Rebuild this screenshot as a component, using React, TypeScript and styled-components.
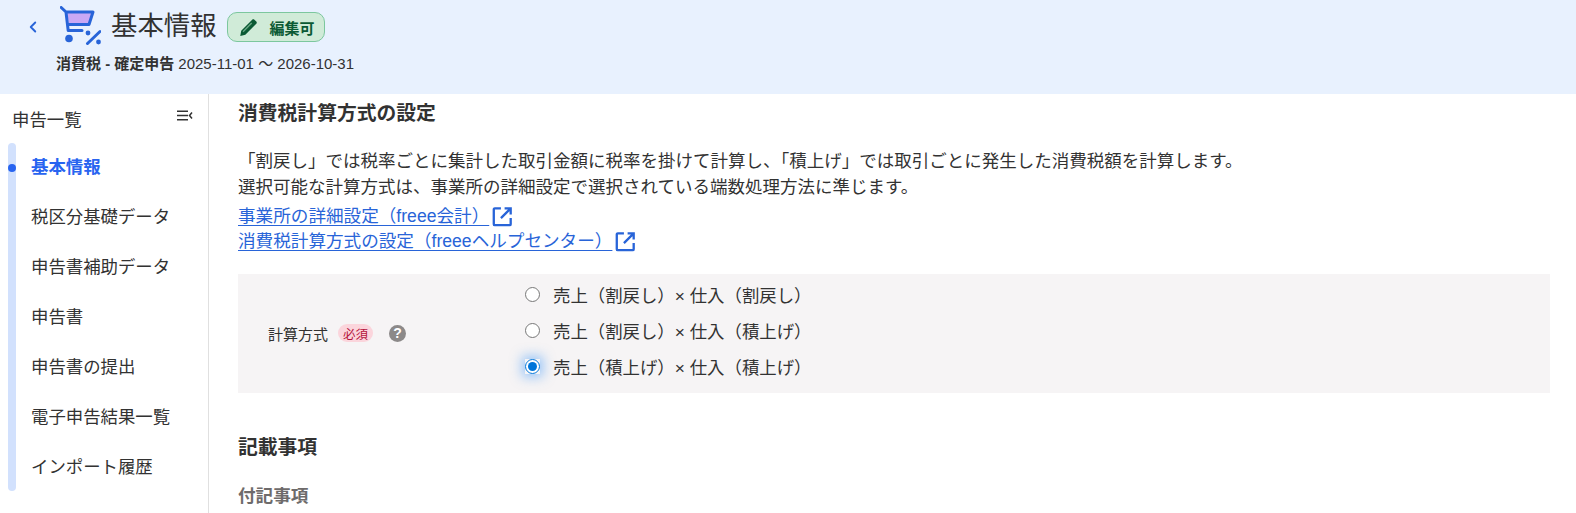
import React from 'react';
import styled, { createGlobalStyle } from 'styled-components';
import { ChevronLeft } from 'lucide-react';

const GlobalStyle = createGlobalStyle`
    html, body {
        margin: 0;
        height: 513px;
        overflow: hidden;
        background: #fff;
        color: #323232;
        font-family: "Liberation Sans", "Noto Sans CJK JP", sans-serif;
    }
`;

const Page = styled.div`
    width: 1576px;
    height: 513px;
    display: flex;
    flex-direction: column;
    overflow: hidden;
`;

const Header = styled.header`
    height: 94px;
    flex: none;
    box-sizing: border-box;
    padding: 5px 0 0 24px;
    background: #e8f1fe;
`;

const TitleRow = styled.div`
    display: flex;
    align-items: center;
    height: 42px;
`;

const BackButton = styled.span`
    display: flex;
    width: 18px;
    color: #2864d8;
    margin-right: 18px;
    margin-top: 1px;
`;

const Title = styled.h1`
    margin: 0 0 0 10px;
    font-size: 26.4px;
    line-height: 42px;
    font-weight: 400;
    color: #323232;
`;

const EditBadge = styled.span`
    display: flex;
    align-items: center;
    box-sizing: border-box;
    width: 98px;
    height: 30px;
    margin: 2px 0 0 10px;
    padding-left: 11px;
    gap: 12px;
    border: 1px solid #7cc79e;
    border-radius: 10px;
    background: #d0ebd8;
    color: #0b5a34;
    font-size: 15px;
    font-weight: 700;
`;

const SubTitle = styled.div`
    display: flex;
    gap: 4px;
    margin: 6px 0 0 32px;
    font-size: 15px;
    line-height: 22px;
    color: #323232;
    strong {
        font-weight: 700;
    }
`;

const Body = styled.div`
    flex: 1;
    display: flex;
    min-height: 0;
`;

const Sidebar = styled.aside`
    width: 209px;
    flex: none;
    box-sizing: border-box;
    border-right: 1px solid #e0e0e0;
`;

const SideHead = styled.div`
    display: flex;
    align-items: center;
    justify-content: space-between;
    height: 49px;
    padding: 0 15px 0 12px;
    font-size: 17.4px;
    color: #323232;
    svg {
        margin-bottom: 6px;
    }
`;

const NavList = styled.ul`
    position: relative;
    list-style: none;
    margin: 0 0 0 8px;
    padding: 0;
    width: 190px;
    &::before {
        content: '';
        position: absolute;
        left: 0;
        top: 0;
        width: 8px;
        height: 348px;
        border-radius: 4px;
        background: #d2e1fd;
    }
`;

const NavItem = styled.li<{ $active?: boolean }>`
    position: relative;
    height: 50px;
    padding-left: 23px;
    line-height: 50px;
    font-size: 17.4px;
    font-weight: ${p => (p.$active ? 700 : 400)};
    color: ${p => (p.$active ? '#2864f0' : '#323232')};
    &:first-child {
        height: 49px;
        line-height: 49px;
    }
    ${p =>
        p.$active &&
        `&::before {
            content: '';
            position: absolute;
            left: 0;
            top: 21px;
            width: 8px;
            height: 8px;
            border-radius: 50%;
            background: #2864f0;
        }`}
`;

const Main = styled.main`
    flex: 1;
    padding: 6px 26px 0 29px;
    min-width: 0;
`;

const SectionTitle = styled.h2<{ $spaced?: boolean }>`
    margin: ${p => (p.$spaced ? '41px 0 0' : '0')};
    font-size: 19.8px;
    line-height: 26px;
    font-weight: 700;
    color: #323232;
`;

const Description = styled.p`
    margin: 22px 0 3px;
    font-size: 17.5px;
    line-height: 26.4px;
    color: #323232;
`;

const LinkRow = styled.div`
    height: 25px;
    display: flex;
    align-items: center;
    gap: 3px;
    font-size: 17.6px;
    line-height: 25px;
`;

const ExternalLink = styled.a`
    color: #2864d8;
    text-decoration: underline;
    text-underline-offset: 3px;
`;

const FormPanel = styled.div`
    display: flex;
    height: 119px;
    margin-top: 20px;
    background: #f6f4f5;
`;

const FieldLabel = styled.div`
    display: flex;
    align-items: center;
    width: 287px;
    flex: none;
    box-sizing: border-box;
    padding-left: 30px;
    font-size: 15px;
    color: #323232;
`;

const RequiredTag = styled.span`
    display: inline-flex;
    align-items: center;
    justify-content: center;
    width: 35px;
    height: 18px;
    margin-left: 10px;
    border-radius: 9px;
    background: #fbd5dc;
    color: #b5133c;
    font-size: 12.500px;
`;

const HelpMark = styled.span`
    display: inline-flex;
    align-items: center;
    justify-content: center;
    width: 17px;
    height: 17px;
    margin-left: 16px;
    border-radius: 50%;
    background: #8c8989;
    color: #fff;
    font-size: 14px;
    font-weight: 700;
`;

const RadioGroup = styled.div`
    display: flex;
    flex-direction: column;
    padding-top: 3px;
`;

const RadioRow = styled.label`
    display: flex;
    align-items: center;
    height: 36px;
    font-size: 17.4px;
    color: #323232;
`;

const RadioInput = styled.input<{ $focused?: boolean }>`
    width: 15px;
    height: 15px;
    margin: 0 13px 0 0;
    accent-color: #0075d9;
    ${p => p.$focused && 'box-shadow: 0 0 12px 3px rgba(60, 150, 250, 0.5); border-radius: 50%;'}
`;

const NoteTitle = styled.h3`
    margin: 23px 0 0;
    font-size: 17.6px;
    line-height: 26px;
    font-weight: 700;
    color: #6e6b6b;
`;

const CartIcon = () => (
    <svg width="41" height="40" viewBox="0 0 41 40" fill="none">
        <path d="M7 6h26l-4 12H9z" fill="#c9a8f5" />
        <path
            d="M1.200 1.500L6 6l2.200 18.500H22M6 6h27l-4 12.500H9"
            stroke="#2864d8"
            strokeWidth="3"
            strokeLinecap="round"
            strokeLinejoin="round"
        />
        <circle cx="9" cy="32.500" r="3.800" fill="#2864d8" />
        <path d="M27.500 37.500L40 25.500" stroke="#2864d8" strokeWidth="3" strokeLinecap="round" />
        <circle cx="28" cy="27" r="2.400" fill="#2864d8" />
        <circle cx="38.500" cy="36" r="2.400" fill="#2864d8" />
    </svg>
);

const PencilIcon = () => (
    <svg width="19" height="19" viewBox="0 0 18 18">
        <path
            d="M1.200 17l.9-5L12.500 1.600c.6-.6 1.500-.6 2.100 0l1.800 1.800c.6.6.6 1.500 0 2.100L6 15.900z"
            fill="#0b5a34"
        />
        <path d="M3.400 12.500l8.200-8.200 .9.9-8.200 8.200z" fill="#6aa886" />
    </svg>
);

const CollapseIcon = () => (
    <svg width="16" height="11" viewBox="0 0 16 11" fill="none" stroke="#323232" strokeWidth="1.500">
        <path d="M0 1.200h11M0 5.500h11M0 9.800h11M15 2.500L12.500 5.500l2.500 3" />
    </svg>
);

const ExternalIcon = () => (
    <svg width="21" height="21" viewBox="0 0 20 20" fill="none" stroke="#2864d8" strokeWidth="2.200">
        <path d="M8.500 2.200H2.700a1 1 0 0 0-1 1v14.100a1 1 0 0 0 1 1h14.100a1 1 0 0 0 1-1v-5.800" />
        <path d="M12 2.200h5.800V8M17.800 2.200L8.500 11.500" />
    </svg>
);

const navItems = ['基本情報', '税区分基礎データ', '申告書補助データ', '申告書', '申告書の提出', '電子申告結果一覧', 'インポート履歴'];

const methods = [
    '売上（割戻し）× 仕入（割戻し）',
    '売上（割戻し）× 仕入（積上げ）',
    '売上（積上げ）× 仕入（積上げ）',
];

const App = () => (
    <Page>
        <GlobalStyle />
        <Header>
            <TitleRow>
                <BackButton>
                    <ChevronLeft size={18} strokeWidth={2.5} />
                </BackButton>
                <CartIcon />
                <Title>基本情報</Title>
                <EditBadge>
                    <PencilIcon />
                    編集可
                </EditBadge>
            </TitleRow>
            <SubTitle>
                <strong>消費税 - 確定申告</strong>
                <span>2025-11-01 ～ 2026-10-31</span>
            </SubTitle>
        </Header>
        <Body>
            <Sidebar>
                <SideHead>
                    申告一覧
                    <CollapseIcon />
                </SideHead>
                <NavList>
                    {navItems.map((item, i) => (
                        <NavItem key={item} $active={i === 0}>
                            {item}
                        </NavItem>
                    ))}
                </NavList>
            </Sidebar>
            <Main>
                <SectionTitle>消費税計算方式の設定</SectionTitle>
                <Description>
                    「割戻し」では税率ごとに集計した取引金額に税率を掛けて計算し、「積上げ」では取引ごとに発生した消費税額を計算します。
                    <br />
                    選択可能な計算方式は、事業所の詳細設定で選択されている端数処理方法に準じます。
                </Description>
                <LinkRow>
                    <ExternalLink href="#">事業所の詳細設定（freee会計）</ExternalLink>
                    <ExternalIcon />
                </LinkRow>
                <LinkRow>
                    <ExternalLink href="#">消費税計算方式の設定（freeeヘルプセンター）</ExternalLink>
                    <ExternalIcon />
                </LinkRow>
                <FormPanel>
                    <FieldLabel>
                        計算方式
                        <RequiredTag>必須</RequiredTag>
                        <HelpMark>?</HelpMark>
                    </FieldLabel>
                    <RadioGroup>
                        {methods.map((m, i) => (
                            <RadioRow key={m}>
                                <RadioInput type="radio" name="method" defaultChecked={i === 2} $focused={i === 2} />
                                {m}
                            </RadioRow>
                        ))}
                    </RadioGroup>
                </FormPanel>
                <SectionTitle $spaced>記載事項</SectionTitle>
                <NoteTitle>付記事項</NoteTitle>
            </Main>
        </Body>
    </Page>
);

export default App;
